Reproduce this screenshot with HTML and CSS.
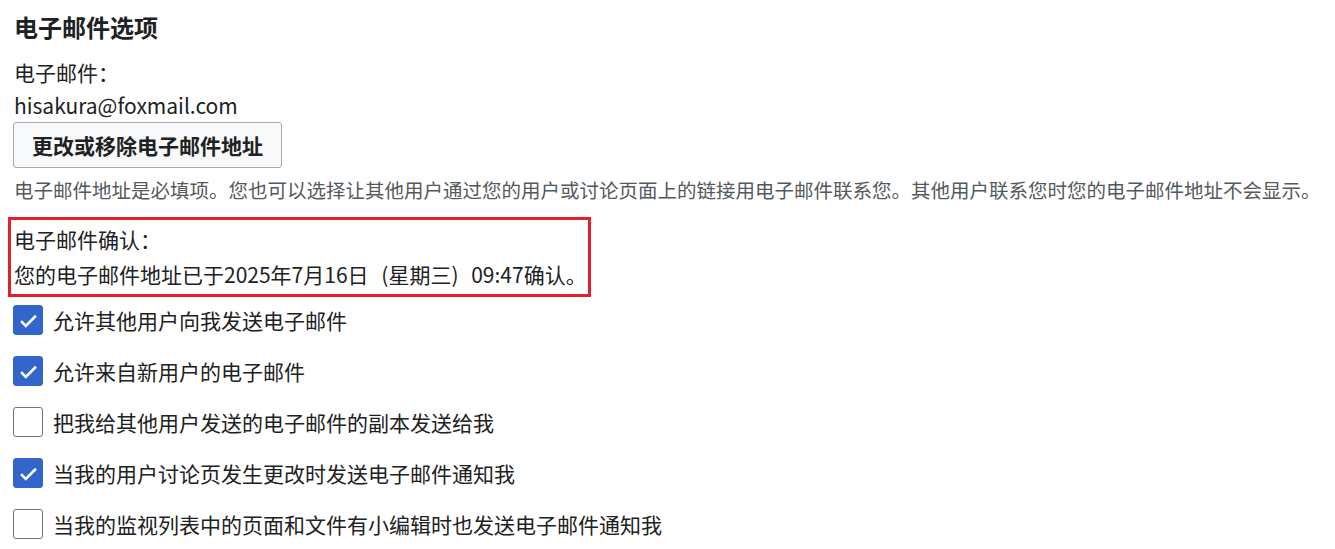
FILE: index.html
```html
<!DOCTYPE html>
<html lang="zh-CN">
  <head>
    <meta charset="utf-8" />
    <title>电子邮件选项</title>
    <link rel="stylesheet" href="styles.css">
  </head>
  <body>
    <div class="prefs">
      <h3 class="section-title">电子邮件选项</h3>

      <div class="field-label">电子邮件：</div>
      <div class="field-value">hisakura@foxmail.com</div>
      <button class="btn">更改或移除电子邮件地址</button>
      <p class="help">电子邮件地址是必填项。您也可以选择让其他用户通过您的用户或讨论页面上的链接用电子邮件联系您。其他用户联系您时您的电子邮件地址不会显示。</p>

      <div class="highlight">
        <div class="field-label">电子邮件确认：</div>
        <div class="field-value confirmed">您的电子邮件地址已于2025年7月16日 (星期三) 09:47确认。</div>
      </div>

      <div class="check-list">
        <label class="check checked"><span class="box"><svg viewBox="0 0 20 20"><path d="M4.5 10.5l3.5 3.5 7.5-7.5" /></svg></span>允许其他用户向我发送电子邮件</label>
        <label class="check checked"><span class="box"><svg viewBox="0 0 20 20"><path d="M4.5 10.5l3.5 3.5 7.5-7.5" /></svg></span>允许来自新用户的电子邮件</label>
        <label class="check"><span class="box"></span>把我给其他用户发送的电子邮件的副本发送给我</label>
        <label class="check checked"><span class="box"><svg viewBox="0 0 20 20"><path d="M4.5 10.5l3.5 3.5 7.5-7.5" /></svg></span>当我的用户讨论页发生更改时发送电子邮件通知我</label>
        <label class="check"><span class="box"></span>当我的监视列表中的页面和文件有小编辑时也发送电子邮件通知我</label>
      </div>
    </div>
  </body>
</html>
```

FILE: styles.css
```css
body {
  margin: 0;
  background: #ffffff;
  color: #202122;
  font-family: "Noto Sans CJK SC", "Noto Sans", sans-serif;
  font-size: 21px;
}

.prefs {
  padding: 10px 14px 0;
}

.section-title {
  margin: 0 0 12px;
  font-size: 24px;
  line-height: 34px;
  font-weight: bold;
}

.field-label,
.field-value {
  line-height: 33px;
}

.btn {
  display: block;
  box-sizing: border-box;
  height: 46px;
  margin-left: -1px;
  padding: 0 18px;
  background: #f8f9fa;
  color: #202122;
  border: 1px solid #a2a9b1;
  border-radius: 3px;
  font-family: inherit;
  font-size: 21px;
  font-weight: bold;
}

.help {
  margin: 7px 0 12px;
  color: #54595d;
  font-size: 19.5px;
  line-height: 30px;
}

.highlight {
  box-sizing: border-box;
  width: 583px;
  margin-left: -6px;
  padding: 2px 3px;
  border: 3px solid #e41f2a;
}

.highlight .field-label,
.highlight .field-value {
  line-height: 35px;
}

.confirmed {
  white-space: nowrap;
  word-spacing: 8px;
}

.check-list {
  display: flex;
  flex-direction: column;
  gap: 21px;
  margin-top: 8px;
}

.check {
  display: flex;
  align-items: center;
  gap: 10px;
  height: 30px;
}

.box {
  box-sizing: border-box;
  width: 30px;
  height: 30px;
  margin-left: -1px;
  border: 1px solid #72777d;
  border-radius: 3px;
  background: #ffffff;
  display: flex;
  align-items: center;
  justify-content: center;
}

.checked .box {
  background: #3366cc;
  border-color: #3366cc;
}

.box svg {
  width: 27px;
  height: 27px;
  fill: none;
  stroke: #ffffff;
  stroke-width: 1.9;
}
```
